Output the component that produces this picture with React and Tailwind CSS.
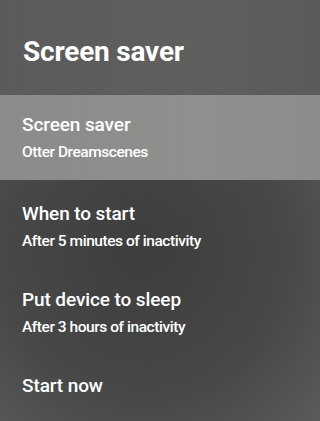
import React from 'react';

const items = [
    { title: 'When to start', sub: 'After 5 minutes of inactivity' },
    { title: 'Put device to sleep', sub: 'After 3 hours of inactivity' },
];

const Row = ({ title, sub }) => (
    <div className="flex flex-col">
        <div className="text-[19px] font-medium leading-[24px] tracking-[-0.1px]">{title}</div>
        {sub && <div className="mt-[2px] text-[15.5px] font-medium leading-[26px] tracking-[-0.45px]">{sub}</div>}
    </div>
);

export default function App() {
    return (
        <div className="w-full h-[421px] overflow-hidden flex flex-col text-white bg-[radial-gradient(ellipse_90%_70%_at_45%_60%,#3d3d3d_0%,#484848_50%,#646464_100%)]" style={{ fontFamily: 'Roboto, "Noto Sans", sans-serif' }}>
            {/* header */}
            <div className="h-[95px] shrink-0 px-[23px] pt-[35px] bg-[linear-gradient(90deg,#5b5b5b,#5f5f5e_60%,#5b5b5b)]">
                <h1 className="text-[28px] font-bold leading-[34px] tracking-[-0.2px]">Screen saver</h1>
            </div>

            {/* selected item */}
            <div className="h-[85px] shrink-0 px-[22px] pt-[18px] bg-[linear-gradient(90deg,#8b8b8a,#8f8f8d_60%,#8c8c8b)]">
                <Row title="Screen saver" sub="Otter Dreamscenes" />
            </div>

            {/* rest of menu */}
            <div className="flex flex-col px-[22px] pt-[22px] gap-[34px]">
                {items.map((it) => (
                    <Row key={it.title} title={it.title} sub={it.sub} />
                ))}
                <Row title="Start now" />
            </div>
        </div>
    );
}
